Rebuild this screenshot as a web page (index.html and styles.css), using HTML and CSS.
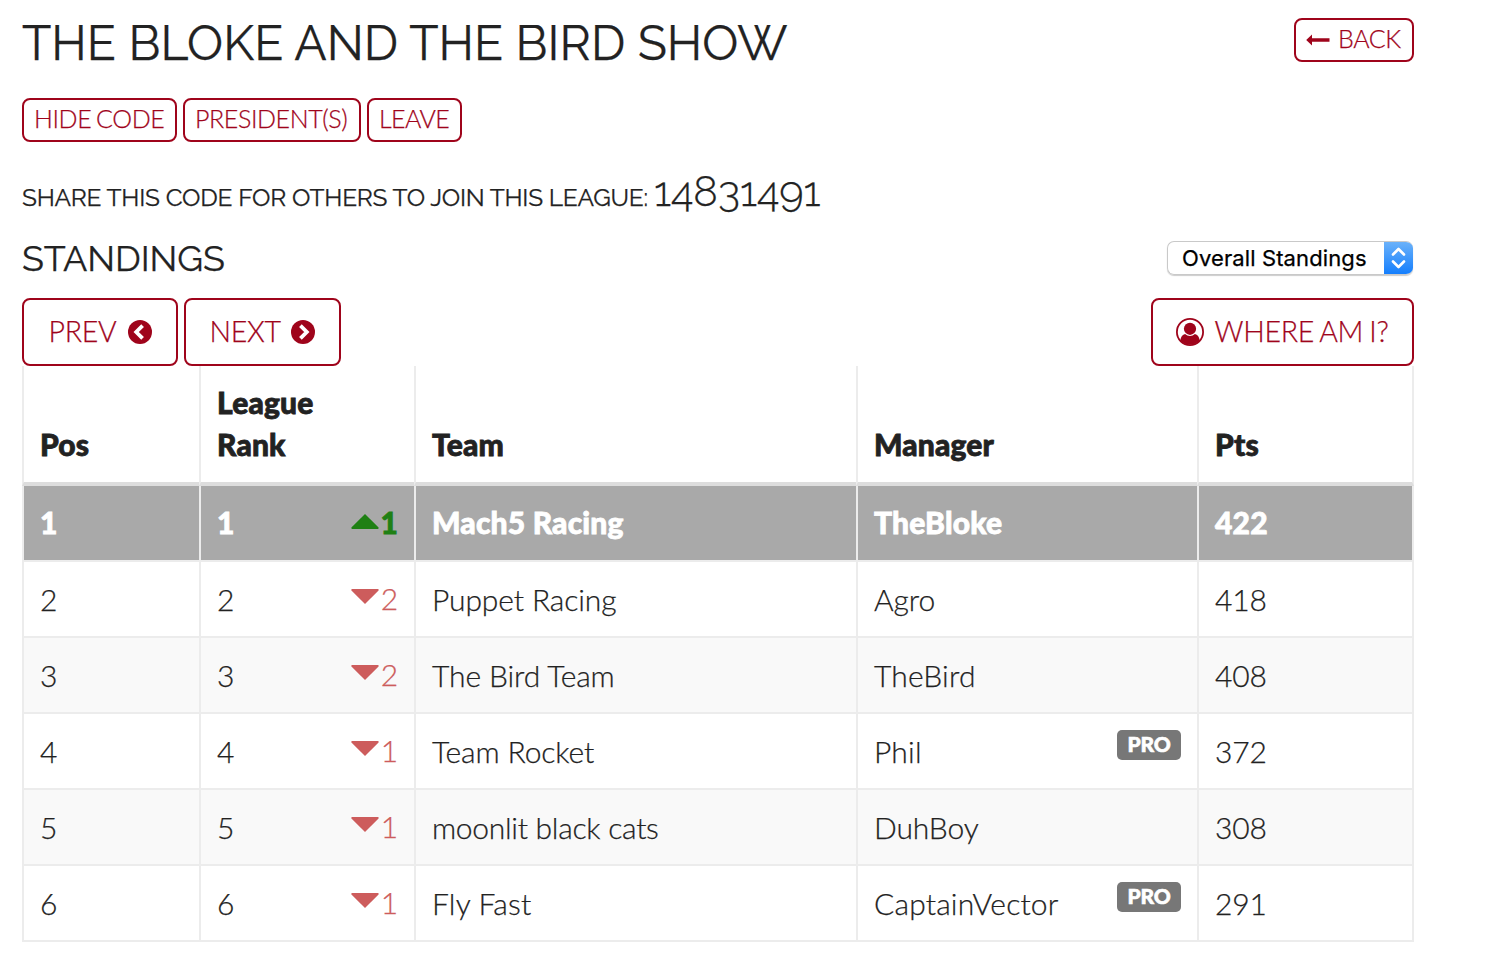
FILE: index.html
```
<!DOCTYPE html>
<html lang="en">
<head>
<meta charset="utf-8">
<title>The Bloke and the Bird Show</title>
<link rel="stylesheet" href="styles.css">
</head>
<body>
<main class="page">
  <header class="top">
    <h1 class="title"><span>THE BLOKE AND THE BIRD SHOW</span></h1>
    <button class="btn btn-sm back"><svg class="arrow" viewBox="0 0 24 12"><path d="M0.2 6 6 0.5V4.2H23.5V7.8H6V11.5Z"/></svg><span>BACK</span></button>
  </header>
  <div class="actions">
    <button class="btn btn-sm hide"><span>HIDE CODE</span></button>
    <button class="btn btn-sm presidents"><span>PRESIDENT(S)</span></button>
    <button class="btn btn-sm leave"><span>LEAVE</span></button>
  </div>
  <p class="share"><span class="share-label">SHARE THIS CODE FOR OTHERS TO JOIN THIS LEAGUE:</span><span class="code">14831491</span></p>
  <div class="heading-row">
    <h2 class="subtitle"><span>STANDINGS</span></h2>
    <div class="select"><span class="select-text">Overall Standings</span><span class="stepper"><svg viewBox="0 0 29 34"><path d="M9 13.5 14.5 8 20 13.5M9 20.5 14.5 26 20 20.5"/></svg></span></div>
  </div>
  <div class="nav">
    <button class="btn prev"><span>PREV</span><svg class="circle" viewBox="0 0 24 24"><circle cx="12" cy="12" r="12"/><path d="M14.6 5.6 8.2 12l6.4 6.4"/></svg></button>
    <button class="btn next"><span>NEXT</span><svg class="circle" viewBox="0 0 24 24"><circle cx="12" cy="12" r="12"/><path d="M9.4 5.6 15.8 12l-6.4 6.4"/></svg></button>
    <button class="btn where"><svg class="user" viewBox="0 0 28 28"><circle class="ring" cx="14" cy="14" r="13.1"/><circle cx="14" cy="10.8" r="6.1"/><path d="M4.3 22.5C4.8 18.8 6.5 16.4 9.1 16 11.8 18.6 16.2 18.6 18.9 16 21.5 16.4 23.2 18.8 23.7 22.5A13 13 0 0 1 4.3 22.5Z"/></svg><span>WHERE AM I?</span></button>
  </div>
  <table class="standings">
    <colgroup><col class="c-pos"><col class="c-rank"><col class="c-team"><col class="c-manager"><col class="c-pts"></colgroup>
    <thead><tr><th>Pos</th><th>League<br>Rank</th><th>Team</th><th>Manager</th><th>Pts</th></tr></thead>
    <tbody>
      <tr class="current"><td>1</td><td><div class="cell">1<span class="move up"><svg viewBox="0 0 28 15"><path d="M14 0 27.6 13.6Q28 15 26.8 15H1.2Q0 15 .4 13.6Z"/></svg>1</span></div></td><td>Mach5 Racing</td><td>TheBloke</td><td>422</td></tr>
      <tr><td>2</td><td><div class="cell">2<span class="move down"><svg viewBox="0 0 28 15"><path d="M14 15 .4 1.4Q0 0 1.2 0H26.8Q28 0 27.6 1.4Z"/></svg>2</span></div></td><td>Puppet Racing</td><td>Agro</td><td>418</td></tr>
      <tr class="odd"><td>3</td><td><div class="cell">3<span class="move down"><svg viewBox="0 0 28 15"><path d="M14 15 .4 1.4Q0 0 1.2 0H26.8Q28 0 27.6 1.4Z"/></svg>2</span></div></td><td>The Bird Team</td><td class="wide">TheBird</td><td>408</td></tr>
      <tr><td>4</td><td><div class="cell">4<span class="move down"><svg viewBox="0 0 28 15"><path d="M14 15 .4 1.4Q0 0 1.2 0H26.8Q28 0 27.6 1.4Z"/></svg>1</span></div></td><td>Team Rocket</td><td class="wide"><div class="cell">Phil<span class="badge">PRO</span></div></td><td>372</td></tr>
      <tr class="odd"><td>5</td><td><div class="cell">5<span class="move down"><svg viewBox="0 0 28 15"><path d="M14 15 .4 1.4Q0 0 1.2 0H26.8Q28 0 27.6 1.4Z"/></svg>1</span></div></td><td class="tight">moonlit black cats</td><td>DuhBoy</td><td>308</td></tr>
      <tr><td>6</td><td><div class="cell">6<span class="move down"><svg viewBox="0 0 28 15"><path d="M14 15 .4 1.4Q0 0 1.2 0H26.8Q28 0 27.6 1.4Z"/></svg>1</span></div></td><td class="wide">Fly Fast</td><td class="wide"><div class="cell">CaptainVector<span class="badge">PRO</span></div></td><td>291</td></tr>
    </tbody>
  </table>
</main>
</body>
</html>
```
FILE: styles.css
```
* { box-sizing: border-box; }
body {
  margin: 0;
  background: #fff;
  color: #222;
  font: 300 30px/42px Lato, sans-serif;
  -webkit-text-stroke: 0.25px currentColor;
}
.page { width: 1392px; margin-left: 22px; padding-top: 18px; }
.top { display: flex; justify-content: space-between; align-items: flex-start; height: 80px; }
.title, .subtitle { margin: 0; font-family: Raleway, Lato, sans-serif; font-weight: 400; white-space: nowrap; }
.title { font-size: 48px; line-height: 51px; letter-spacing: 0.06px; }
.btn {
  display: flex;
  align-items: center;
  height: 68px;
  margin: 0;
  padding: 0 0 0 24px;
  border: 2px solid #9f041b;
  border-radius: 8px;
  background: #fff;
  color: #9f041b;
  font: 300 28.5px/40px Lato, sans-serif;
  letter-spacing: -0.25px;
  white-space: nowrap;
  -webkit-text-stroke: 0.25px currentColor;
}
.btn svg { flex: none; fill: currentColor; }
.nav .btn span { padding-bottom: 2px; }
.btn-sm { height: 44px; padding: 0 0 5px 10px; font-size: 25px; letter-spacing: -0.4px; }
.back { width: 120px; }
.arrow { width: 24px; height: 12px; margin: 4px 8px 0 0; }
.actions { display: flex; gap: 6px; height: 44px; }
.hide { width: 155px; word-spacing: -1.6px; }
.presidents { width: 178px; }
.leave { width: 95px; letter-spacing: -0.6px; }
.share { display: flex; align-items: baseline; height: 60px; margin: 25px 0 2px; font-family: Raleway, Lato, sans-serif; font-weight: 400; line-height: 50px; white-space: nowrap; }
.share-label { width: 632px; font-size: 24.5px; letter-spacing: -0.23px; }
.code { font-size: 41.7px; font-weight: 300; font-feature-settings: "onum", "pnum"; }
.heading-row { display: flex; justify-content: space-between; height: 69px; padding-top: 8px; }
.subtitle { font-size: 36px; line-height: 43px; letter-spacing: -0.1px; }
.select { display: flex; justify-content: space-between; width: 246px; height: 34px; margin: 4px 1px 0 0; padding-left: 14px; border: 1px solid #c9c9c9; border-right: 0; border-radius: 7px; box-shadow: 0 1px 1px #ccc; overflow: hidden; color: #000; }
.select-text { font: 400 22px/32px Inter, sans-serif; letter-spacing: 0.11px; white-space: nowrap; }
.stepper { width: 29px; height: 34px; margin-top: -1px; background: linear-gradient(#6db3fa, #127dfd); }
.stepper svg { display: block; width: 29px; height: 34px; fill: none; stroke: #fff; stroke-width: 2.6; stroke-linecap: round; stroke-linejoin: round; }
.nav { display: flex; height: 68px; }
.prev { width: 156px; margin-right: 6px; padding-left: 24.5px; }
.next { width: 157px; padding-left: 23.5px; }
.where { width: 263px; margin-left: auto; padding-left: 23px; letter-spacing: -0.3px; word-spacing: -1.2px; }
.circle { width: 24px; height: 24px; margin-left: auto; margin-right: 24px; }
.circle path { fill: none; stroke: #fff; stroke-width: 3.8; }
.user { width: 28px; height: 28px; margin-right: 10.5px; }
.user .ring { fill: none; stroke: currentColor; stroke-width: 1.8; }
.standings { width: 1392px; table-layout: fixed; border-spacing: 0; }
.c-pos { width: 177px; }
.c-rank { width: 215px; }
.c-team { width: 442px; }
.c-manager { width: 341px; }
.c-pts { width: 217px; }
.standings th, .standings td { padding: 16px; border-left: 2px solid #ececec; border-bottom: 2px solid #ececec; text-align: left; white-space: nowrap; }
.standings th:last-child, .standings td:last-child { border-right: 2px solid #ececec; }
.standings th { height: 120px; padding-top: 15px; padding-bottom: 17px; border-bottom: 4px solid #ddd; vertical-align: bottom; font-weight: 900; letter-spacing: 0.15px; -webkit-text-stroke: 0.8px currentColor; }
.standings td { height: 76px; line-height: 42px; letter-spacing: -0.12px; }
.standings .wide { letter-spacing: 0.18px; }
.standings .tight { letter-spacing: -0.28px; }
.odd td { background: #f9f9f9; }
.standings .current td { padding: 15px 16px 17px; background: #a9a9a9; color: #fff; font-weight: 900; letter-spacing: 0.18px; -webkit-text-stroke: 0.8px currentColor; }
.cell { display: flex; justify-content: space-between; height: 42px; }
.move { display: flex; align-items: flex-start; line-height: 40px; gap: 2px; }
.move svg { width: 28px; height: 15px; margin-top: 11px; fill: currentColor; }
.up { color: #1f8014; line-height: 42px; gap: 1px; }
.up svg { margin-top: 13px; }
.down { color: #cd5c5c; }
.badge { width: 64px; height: 30px; border-radius: 5px; background: #777; color: #fff; font-size: 21px; font-weight: 900; line-height: 28px; text-align: center; letter-spacing: -0.2px; -webkit-text-stroke: 0.6px currentColor; }
```
